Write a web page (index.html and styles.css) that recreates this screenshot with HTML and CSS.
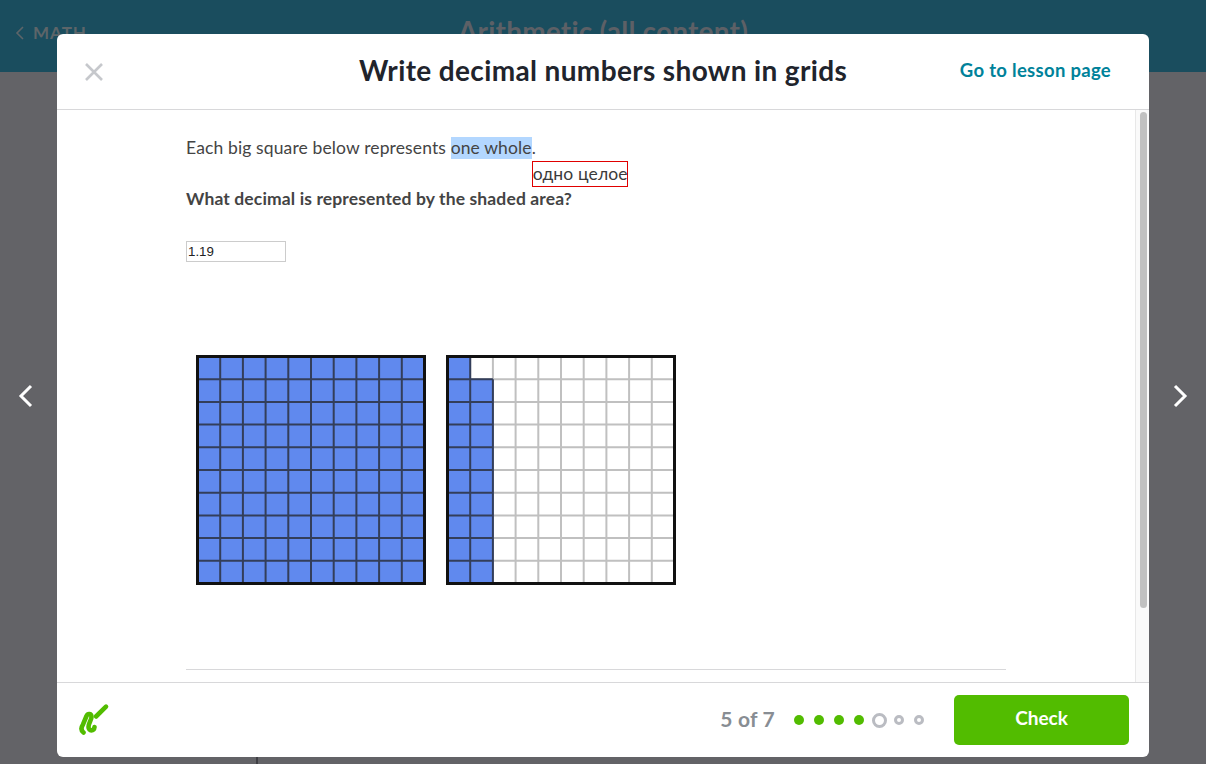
FILE: index.html
```html
<!DOCTYPE html>
<html lang="en">
<head>
  <meta charset="UTF-8">
  <meta name="viewport" content="width=device-width, initial-scale=1.0">
  <title>Write decimal numbers shown in grids</title>
  <link rel="stylesheet" href="styles.css">
</head>
<body>
  <div class="pageBar">
    <a class="backLink">
      <svg width="10" height="16" viewBox="0 0 10 16"><path d="M8 2 2 8l6 6" fill="none" stroke="#5d6569" stroke-width="1.6"/></svg>
      <span>MATH</span>
    </a>
    <h2 class="pageTitle">Arithmetic (all content)</h2>
  </div>
  <div class="pageLine"></div>

  <svg class="navArrow navLeft" width="16" height="24" viewBox="0 0 16 24"><path d="M13 2 3 12l10 10" fill="none" stroke="#fff" stroke-width="3"/></svg>
  <svg class="navArrow navRight" width="16" height="24" viewBox="0 0 16 24"><path d="M3 2l10 10L3 22" fill="none" stroke="#fff" stroke-width="3"/></svg>

  <div class="modal">
    <div class="modalHead">
      <svg class="closeIcon" width="20" height="20" viewBox="0 0 20 20"><path d="M2 2l16 16M18 2 2 18" fill="none" stroke="#c6c8cc" stroke-width="2.6"/></svg>
      <h1 class="modalTitle">Write decimal numbers shown in grids</h1>
      <a class="lessonLink">Go to lesson page</a>
    </div>

    <div class="modalBody">
      <div class="scrollArea">
        <div class="question">
          <p class="intro">Each big square below represents <span class="mark">one whole<span class="translation">одно целое</span></span>.</p>
          <p class="ask">What decimal is represented by the shaded area?</p>
          <input class="answer" type="text" value="1.19">
          <div class="grids">
            <svg width="232" height="232" viewBox="0 0 232 232">
              <rect x="2.5" y="2.5" width="227" height="227" fill="#6089ee"/>
              <path class="darkLines" d="M25.2 2.5V229.5M47.9 2.5V229.5M70.6 2.5V229.5M93.3 2.5V229.5M116 2.5V229.5M138.7 2.5V229.5M161.4 2.5V229.5M184.1 2.5V229.5M206.8 2.5V229.5M2.5 25.2H229.5M2.5 47.9H229.5M2.5 70.6H229.5M2.5 93.3H229.5M2.5 116H229.5M2.5 138.7H229.5M2.5 161.4H229.5M2.5 184.1H229.5M2.5 206.8H229.5"/>
              <rect class="gridEdge" x="2.5" y="2.5" width="227" height="227"/>
            </svg>
            <svg width="232" height="232" viewBox="0 0 232 232">
              <path class="greyLines" d="M25.2 2.5V229.5M47.9 2.5V229.5M70.6 2.5V229.5M93.3 2.5V229.5M116 2.5V229.5M138.7 2.5V229.5M161.4 2.5V229.5M184.1 2.5V229.5M206.8 2.5V229.5M2.5 25.2H229.5M2.5 47.9H229.5M2.5 70.6H229.5M2.5 93.3H229.5M2.5 116H229.5M2.5 138.7H229.5M2.5 161.4H229.5M2.5 184.1H229.5M2.5 206.8H229.5"/>
              <path d="M2.5 2.5H25.2V25.2H47.9V229.5H2.5Z" fill="#6089ee"/>
              <path class="darkLines" d="M25.2 2.5V229.5M47.9 25.2V229.5M2.5 25.2H47.9M2.5 47.9H47.9M2.5 70.6H47.9M2.5 93.3H47.9M2.5 116H47.9M2.5 138.7H47.9M2.5 161.4H47.9M2.5 184.1H47.9M2.5 206.8H47.9"/>
              <rect class="gridEdge" x="2.5" y="2.5" width="227" height="227"/>
            </svg>
          </div>
          <hr class="divider">
        </div>
      </div>
      <div class="scrollTrack"><div class="scrollThumb"></div></div>
    </div>

    <div class="modalFoot">
      <svg class="scratchIcon" width="34" height="34" viewBox="0 0 34 34"><path d="M5.5 29.5C3 27.5 3 24.5 5 21.5L8.5 13C10 10 13.5 10.5 13.5 14 13.5 17 10.5 20 10.5 24 10.5 28.5 16 28.5 16.5 24" fill="none" stroke="#52bc00" stroke-width="4.6" stroke-linecap="round"/><path d="M18 13.5 28 3.7" fill="none" stroke="#52bc00" stroke-width="4.6" stroke-linecap="round"/></svg>
      <span class="count">5 of 7</span>
      <ul class="dots">
        <li class="done"></li>
        <li class="done"></li>
        <li class="done"></li>
        <li class="done"></li>
        <li class="now"></li>
        <li></li>
        <li></li>
      </ul>
      <button class="checkBtn">Check</button>
    </div>
  </div>
</body>
</html>
```

FILE: styles.css
```css
* {
  margin: 0;
  padding: 0;
  box-sizing: border-box;
}
html, body {
  height: 100%;
  overflow: hidden;
}
body {
  background-color: #636367;
  font-family: "Lato", "Open Sans", sans-serif;
}
.pageBar {
  display: flex;
  justify-content: center;
  height: 72px;
  padding-top: 14px;
  background-color: #1a4d5e;
}
.backLink {
  position: absolute;
  left: 15px;
  top: 22px;
  display: flex;
  align-items: center;
  gap: 8px;
  font-size: 17px;
  font-weight: 700;
  letter-spacing: 1px;
  color: #5d6569;
}
.pageTitle {
  font-size: 28px;
  font-weight: 700;
  letter-spacing: .2px;
  color: #5d6066;
}
.pageLine {
  position: absolute;
  left: 256px;
  top: 757px;
  width: 2px;
  height: 7px;
  background-color: #3f3f44;
}
.navArrow {
  position: absolute;
  top: 384px;
}
.navLeft {
  left: 18px;
}
.navRight {
  left: 1172px;
}
.modal {
  position: absolute;
  left: 57px;
  top: 34px;
  width: 1092px;
  height: 723px;
  display: flex;
  flex-direction: column;
  background-color: #fff;
  border-radius: 6px;
}
.modalHead {
  flex: none;
  display: flex;
  align-items: center;
  justify-content: center;
  position: relative;
  height: 76px;
  border-bottom: 1px solid #d8d8da;
}
.closeIcon {
  position: absolute;
  left: 27px;
  top: 28px;
}
.modalTitle {
  font-size: 28px;
  font-weight: 700;
  letter-spacing: .36px;
  color: #21242c;
  margin-top: -4px;
}
.lessonLink {
  position: absolute;
  right: 38px;
  top: 25px;
  font-size: 18.5px;
  font-weight: 700;
  letter-spacing: .3px;
  color: #00829a;
}
.modalBody {
  flex: 1;
  display: flex;
  min-height: 0;
  border-bottom: 1px solid #d8d8da;
}
.scrollArea {
  flex: 1;
  overflow: hidden;
  padding-top: 26px;
}
.question {
  width: 820px;
  margin: 0 auto;
  font-size: 17.5px;
  letter-spacing: .13px;
  color: #444;
}
.intro {
  height: 51px;
  line-height: 24px;
}
.mark {
  position: relative;
  display: inline-block;
  background-color: #b3d7ff;
  line-height: 22px;
}
.translation {
  position: absolute;
  left: 81px;
  top: 24px;
  width: 96px;
  height: 26px;
  border: 1px solid #e00000;
  background-color: #fff;
  line-height: 24px;
  text-align: center;
  white-space: nowrap;
  color: #3b3b3b;
}
.ask {
  height: 54px;
  line-height: 24px;
  font-weight: 700;
}
.answer {
  display: block;
  width: 100px;
  height: 21px;
  padding: 0 1px;
  border: 1px solid #ccc;
  font-family: "Liberation Sans", sans-serif;
  font-size: 13.3px;
  color: #222;
}
.grids {
  display: flex;
  gap: 18px;
  margin: 92px 0 0 9px;
}
.darkLines {
  fill: none;
  stroke: #333e5a;
  stroke-width: 2;
}
.greyLines {
  fill: none;
  stroke: #c0c0c0;
  stroke-width: 2;
}
.gridEdge {
  fill: none;
  stroke: #111;
  stroke-width: 3;
}
.divider {
  height: 1px;
  margin-top: 83px;
  border: 0;
  background-color: #d8d8da;
}
.scrollTrack {
  flex: none;
  width: 14px;
  padding: 2px 2px 0 4px;
  border-left: 1px solid #e8e8e8;
  background-color: #fafafa;
}
.scrollThumb {
  height: 496px;
  border-radius: 4px;
  background-color: #c1c1c1;
}
.modalFoot {
  flex: none;
  display: flex;
  align-items: center;
  height: 74px;
  padding: 0 20px;
}
.scratchIcon {
  margin: 0 auto 0 1px;
}
.count {
  margin-bottom: 4px;
  font-size: 21px;
  font-weight: 700;
  letter-spacing: .2px;
  color: #888d93;
}
.dots {
  list-style: none;
  display: flex;
  align-items: center;
  gap: 10px;
  margin: 0 30px 0 19px;
}
.dots li {
  width: 10px;
  height: 10px;
  border: 3px solid #babcc2;
  border-radius: 50%;
}
.dots li.done {
  border: 0;
  background-color: #52bc00;
}
.dots li.now {
  width: 15px;
  height: 15px;
  margin: 0 -3px 0 -2px;
}
.checkBtn {
  width: 175px;
  height: 50px;
  padding-bottom: 5px;
  border: 0;
  border-radius: 5px;
  background-color: #52bc00;
  font-family: inherit;
  font-size: 19px;
  font-weight: 700;
  color: #fff;
}
```
